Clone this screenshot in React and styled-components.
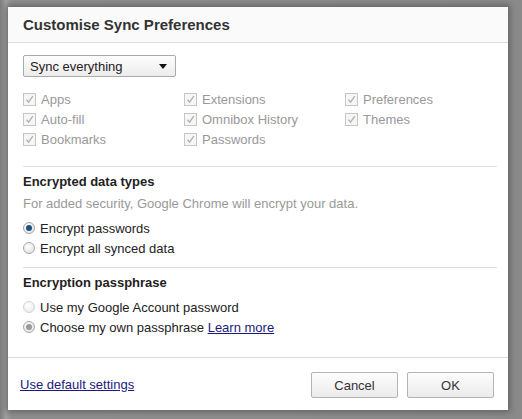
import React from "react";
import styled, { createGlobalStyle } from "styled-components";

const Global = createGlobalStyle`
  html, body { margin: 0; padding: 0; }
  body {
    width: 522px; height: 419px; overflow: hidden;
    background: #8c8c8c;
    font-family: "Liberation Sans", Arial, sans-serif;
  }
`;

const Backdrop = styled.div`
  width: 522px;
  height: 419px;
  box-sizing: border-box;
  padding: 7px 14px 9px 8px;
  background: linear-gradient(to right, #7d7d7d 0px, #a0a0a0 6px, #8f8f8f 12px, #8a8a8a 100%);
`;

const Dialog = styled.div`
  width: 500px;
  height: 403px;
  background: #fff;
  display: flex;
  flex-direction: column;
  box-shadow: 0 0 6px 2px rgba(60, 60, 60, 0.5);
`;

const Header = styled.div`
  height: 36px;
  box-sizing: border-box;
  padding: 9px 15px 0;
  background: #fafafa;
  border-bottom: 1px solid #dcdcdc;
  font-size: 15px;
  font-weight: bold;
  color: #333;
`;

const Body = styled.div`
  flex: 1;
  padding: 12px 11px 0 15px;
  display: flex;
  flex-direction: column;
`;

const Select = styled.div`
  width: 153px;
  height: 22px;
  box-sizing: border-box;
  border: 1px solid #aaa;
  border-radius: 2px;
  background: linear-gradient(#fdfdfd, #ececec);
  display: flex;
  align-items: center;
  justify-content: space-between;
  padding: 0 8px 0 6px;
  font-size: 13px;
  color: #222;
`;

const Arrow = styled.span`
  width: 0; height: 0;
  border-left: 4px solid transparent;
  border-right: 4px solid transparent;
  border-top: 5px solid #111;
`;

const Grid = styled.div`
  display: grid;
  grid-template-columns: 161px 161px 1fr;
  grid-auto-rows: 20px;
  margin-top: 12px;
  padding-bottom: 17px;
  border-bottom: 1px solid #dcdcdc;
`;

const Check = styled.label`
  display: flex;
  align-items: center;
  gap: 5px;
  font-size: 13px;
  color: #999;
`;

const Box = styled.span`
  width: 11px; height: 11px;
  border: 1px solid #c6c6c6;
  background: #f6f6f6;
  display: flex;
  align-items: center;
  justify-content: center;
`;

const Section = styled.div`
  padding: 7px 0 ${p => (p.$last ? 12 : 9)}px;
  border-bottom: ${p => (p.$last ? "none" : "1px solid #dcdcdc")};
`;

const Heading = styled.div`
  font-size: 13px;
  font-weight: bold;
  color: #222;
  height: 16px;
  line-height: 16px;
`;

const Note = styled.div`
  font-size: 13px;
  color: #999;
  margin-top: 6px;
  height: 16px;
  line-height: 16px;
`;

const Radios = styled.div`
  display: flex;
  flex-direction: column;
  margin-top: ${p => p.$top}px;
`;

const RadioRow = styled.label`
  display: flex;
  align-items: center;
  gap: 5px;
  height: 20px;
  font-size: 13px;
  color: #222;
`;

const Radio = styled.span`
  flex: none;
  width: 12px; height: 12px;
  box-sizing: border-box;
  border-radius: 50%;
  border: 1px solid ${p => (p.$faint ? "#d4d4d4" : "#a8a8a8")};
  background: ${p => (p.$faint ? "radial-gradient(circle at 40% 35%, #fff, #e6e6e6)" : "radial-gradient(circle at 40% 35%, #fff, #dcdcdc)")};
  display: flex;
  align-items: center;
  justify-content: center;
  &::after {
    content: "";
    display: ${p => (p.$on ? "block" : "none")};
    width: 6px; height: 6px;
    border-radius: 50%;
    background: ${p => p.$dot};
  }
`;

const Link = styled.a`
  color: #1a1a7e;
  text-decoration: underline;
  font-size: 13px;
  cursor: pointer;
`;

const Footer = styled.div`
  height: 53px;
  box-sizing: border-box;
  border-top: 1px solid #dcdcdc;
  display: flex;
  align-items: center;
  padding: 0 14px 0 12px;
  gap: 9px;
`;

const Spacer = styled.div`flex: 1;`;

const Button = styled.button`
  width: 87px;
  height: 26px;
  border: 1px solid #b4b4b4;
  border-radius: 2px;
  background: linear-gradient(#fdfdfd, #ebebeb);
  font-family: "Liberation Sans", Arial, sans-serif;
  font-size: 13px;
  color: #333;
  margin-top: 2px;
`;

const Tick = () => (
  <svg width="9" height="9" viewBox="0 0 9 9">
    <path d="M1.5 4.8 L3.6 7.2 L7.8 1.2" stroke="#b0b0b0" strokeWidth="1.3" fill="none" />
  </svg>
);

const items = ["Apps", "Extensions", "Preferences", "Auto-fill", "Omnibox History", "Themes", "Bookmarks", "Passwords"];

export default function App() {
  return (
    <>
      <Global />
      <Backdrop>
        <Dialog>
          <Header>Customise Sync Preferences</Header>
          <Body>
            <Select>
              <span>Sync everything</span>
              <Arrow />
            </Select>
            <Grid>
              {items.map(t => (
                <Check key={t}>
                  <Box><Tick /></Box>
                  {t}
                </Check>
              ))}
            </Grid>
            <Section>
              <Heading>Encrypted data types</Heading>
              <Note>For added security, Google Chrome will encrypt your data.</Note>
              <Radios $top={6}>
                <RadioRow><Radio $on $dot="#1f4f80" />Encrypt passwords</RadioRow>
                <RadioRow><Radio />Encrypt all synced data</RadioRow>
              </Radios>
            </Section>
            <Section $last>
              <Heading>Encryption passphrase</Heading>
              <Radios $top={6}>
                <RadioRow><Radio $faint />Use my Google Account password</RadioRow>
                <RadioRow>
                  <Radio $on $dot="#9a9a9a" />
                  <span>Choose my own passphrase <Link>Learn more</Link></span>
                </RadioRow>
              </Radios>
            </Section>
          </Body>
          <Footer>
            <Link>Use default settings</Link>
            <Spacer />
            <Button>Cancel</Button>
            <Button>OK</Button>
          </Footer>
        </Dialog>
      </Backdrop>
    </>
  );
}
